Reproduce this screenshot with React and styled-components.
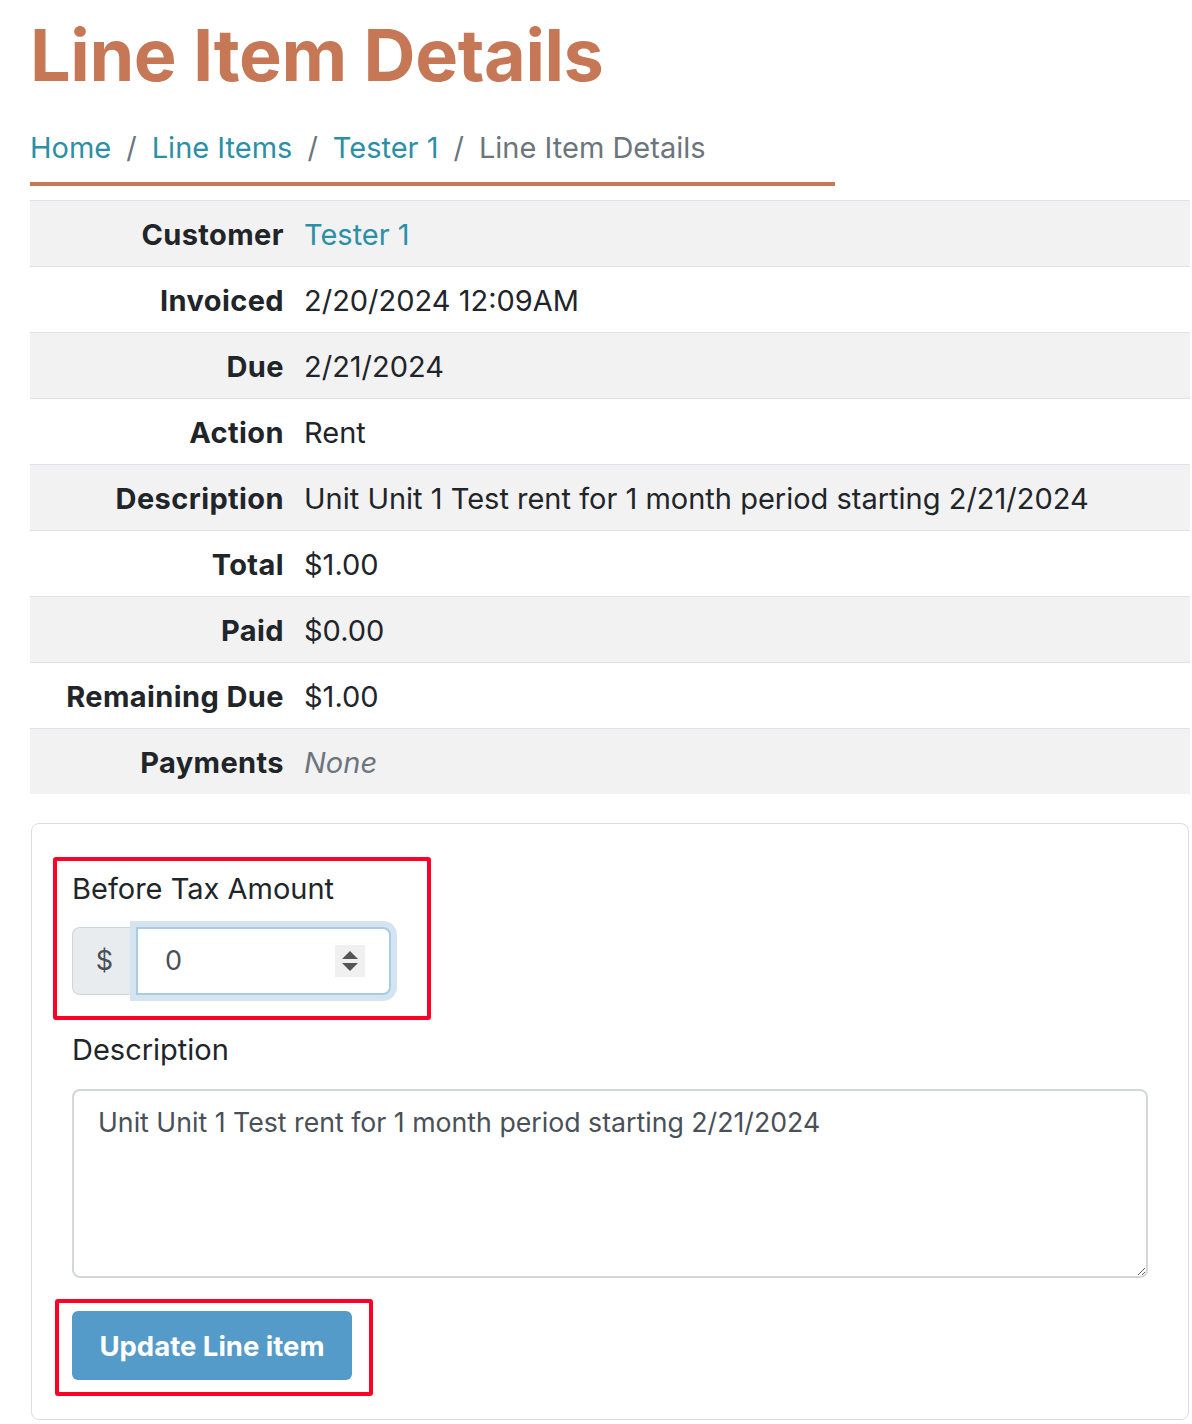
import React from 'react'
import styled, { createGlobalStyle } from 'styled-components'

const GlobalStyle = createGlobalStyle`
  body {
    margin: 0;
    font-family: Inter, "Noto Sans", sans-serif;
    color: #212529;
    background: #fff;
  }
`

const Page = styled.div`
  padding: 0 2px 0 30px;
  font-size: 29px;
  line-height: 40px;
`

const Title = styled.h1`
  margin: 0;
  padding-top: 12px;
  font-size: 72px;
  line-height: 1.2;
  font-weight: 700;
  color: #c67755;
  letter-spacing: -0.4px;
`

const Crumbs = styled.nav`
  display: flex;
  align-items: center;
  width: 805px;
  margin-top: 30px;
  padding-bottom: 14px;
  border-bottom: 4px solid #c67755;
`

const Crumb = styled.a`
  color: ${p => (p.$current ? '#6c757d' : '#2b8fa6')};
  text-decoration: none;
`

const Sep = styled.span`
  color: #6c757d;
  padding: 0 15px;
`

const Table = styled.div`
  margin-top: 14px;
  display: grid;
  grid-template-columns: 264px 1fr;
`

const Row = styled.div`
  display: contents;
  & > * {
    background: ${p => (p.$odd ? '#f2f2f2' : '#fff')};
    border-top: 1px solid #dee2e6;
    padding: 14px 10px 11px;
  }
`

const Label = styled.div`
  font-weight: 700;
  text-align: right;
  letter-spacing: 0.4px;
`

const Value = styled.div`
  color: ${p => (p.$muted ? '#6c757d' : '#212529')};
  font-style: ${p => (p.$muted ? 'italic' : 'normal')};
`

const Link = styled.a`
  color: #2b8fa6;
  text-decoration: none;
`

const Card = styled.div`
  margin: 29px 1px 0 1px;
  border: 1px solid #dcdcdc;
  border-radius: 8px;
  padding: 33px 40px 23px 40px;
`

const Highlight = styled.div`
  box-sizing: border-box;
  width: ${p => p.$width}px;
  margin-left: ${p => -p.$offset}px;
  padding: ${p => p.$pad};
  border: 4px solid #ff0026;
  border-radius: 3px;
`

const FieldLabel = styled.label`
  display: block;
  margin-bottom: ${p => p.$gap || 18}px;
`

const InputGroup = styled.div`
  display: flex;
  width: 319px;
  height: 68px;
`

const Addon = styled.span`
  flex: 0 0 64px;
  box-sizing: border-box;
  display: flex;
  align-items: center;
  justify-content: center;
  background: #e9ecef;
  border: 1px solid #ced4da;
  border-right: none;
  border-radius: 8px 0 0 8px;
  color: #495057;
  font-size: 27px;
`

const Field = styled.div`
  flex: 1;
  min-width: 0;
  display: flex;
  align-items: center;
  padding: 0 24px 0 27px;
  border: 2px solid #a9cbe3;
  border-radius: 0 8px 8px 0;
  box-shadow: 0 0 0 6px #d4e5f1;
  background: #fff;
`

const NumberInput = styled.input`
  flex: 1;
  width: 0;
  min-width: 0;
  border: none;
  outline: none;
  padding: 0;
  font: inherit;
  font-size: 27px;
  color: #495057;
  background: transparent;
`

const Spinner = styled.span`
  flex: 0 0 30px;
  display: flex;
  flex-direction: column;
  align-items: center;
  justify-content: center;
  gap: 4px;
  height: 32px;
  background: #f0f0f0;
`

const Arrow = styled.span`
  width: 0;
  height: 0;
  border-left: 8px solid transparent;
  border-right: 8px solid transparent;
  ${p => (p.$up ? 'border-bottom: 8px solid #555;' : 'border-top: 8px solid #555;')}
`

const Group = styled.div`
  margin-top: ${p => p.$top || 0}px;
`

const TextArea = styled.textarea`
  display: block;
  box-sizing: border-box;
  width: 100%;
  height: 189px;
  padding: 11px 24px;
  border: 2px solid #d3d7dc;
  border-radius: 8px;
  font: inherit;
  font-size: 26.7px;
  color: #495057;
  resize: vertical;
  outline: none;
`

const Button = styled.button`
  width: 280px;
  height: 69px;
  padding: 0;
  border: none;
  border-radius: 6px;
  background: #559bc9;
  color: #fff;
  font: inherit;
  font-size: 27.5px;
  font-weight: 700;
  white-space: nowrap;
`

const rows = [
  ['Customer', <Link href="#">Tester 1</Link>],
  ['Invoiced', '2/20/2024 12:09AM'],
  ['Due', '2/21/2024'],
  ['Action', 'Rent'],
  ['Description', 'Unit Unit 1 Test rent for 1 month period starting 2/21/2024'],
  ['Total', '$1.00'],
  ['Paid', '$0.00'],
  ['Remaining Due', '$1.00'],
  ['Payments', 'None', true]
]

export default function App () {
  return (
    <Page>
      <GlobalStyle />
      <Title>Line Item Details</Title>
      <Crumbs>
        <Crumb href="#">Home</Crumb>
        <Sep>/</Sep>
        <Crumb href="#">Line Items</Crumb>
        <Sep>/</Sep>
        <Crumb href="#">Tester 1</Crumb>
        <Sep>/</Sep>
        <Crumb $current>Line Item Details</Crumb>
      </Crumbs>
      <Table>
        {rows.map(([label, value, muted], i) => (
          <Row key={label} $odd={i % 2 === 0}>
            <Label>{label}</Label>
            <Value $muted={muted}>{value}</Value>
          </Row>
        ))}
      </Table>
      <Card>
        <Highlight $width={378} $offset={19} $pad="8px 15px 21px">
          <FieldLabel>Before Tax Amount</FieldLabel>
          <InputGroup>
            <Addon>$</Addon>
            <Field>
              <NumberInput defaultValue="0" />
              <Spinner>
                <Arrow $up />
                <Arrow />
              </Spinner>
            </Field>
          </InputGroup>
        </Highlight>
        <Group $top={10}>
          <FieldLabel $gap={19}>Description</FieldLabel>
          <TextArea defaultValue="Unit Unit 1 Test rent for 1 month period starting 2/21/2024" />
        </Group>
        <Group $top={21}>
          <Highlight $width={318} $offset={17} $pad="8px 16px 12px 13px">
            <Button>Update Line item</Button>
          </Highlight>
        </Group>
      </Card>
    </Page>
  )
}
